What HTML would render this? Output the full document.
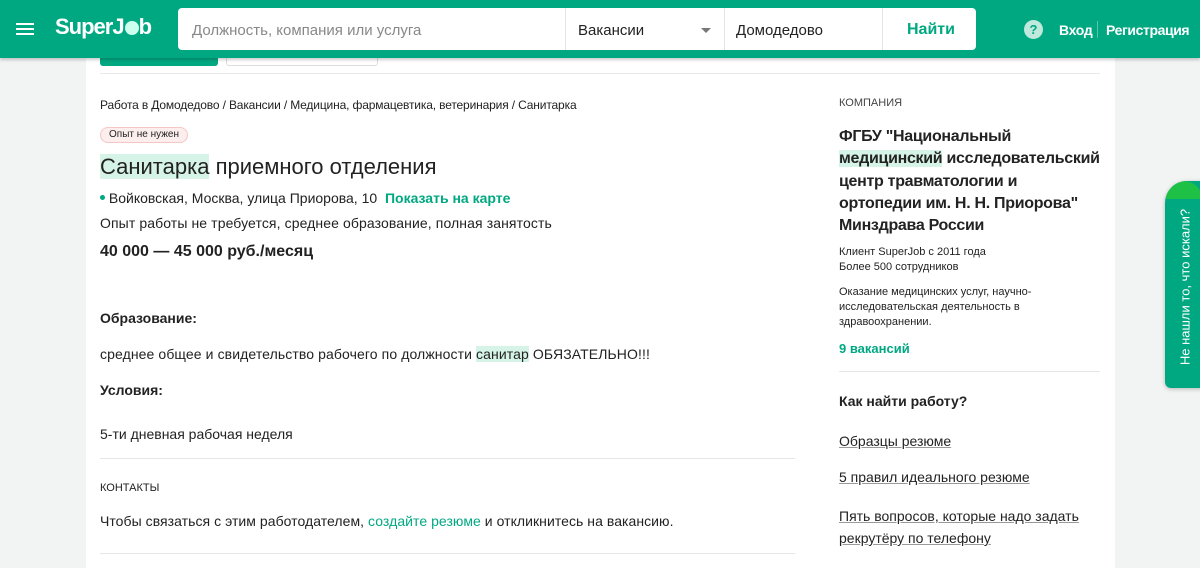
<!DOCTYPE html>
<html><head><meta charset="utf-8"><style>
*{box-sizing:border-box;margin:0;padding:0}
body{width:1200px;height:568px;overflow:hidden;background:#f2f3f3;font-family:"Liberation Sans","DejaVu Sans",sans-serif;color:#222;position:relative}
.hdr{position:absolute;left:0;top:0;width:1200px;height:58px;background:#00a882;box-shadow:0 2px 3px rgba(0,0,0,.2);z-index:5}
.panel{position:absolute;left:86px;top:0;width:1029px;height:568px;background:#fff}
.a{position:absolute;white-space:nowrap}
.hl{background:#d6f3e8}
.g{color:#00a882}
</style></head><body>
<div class="panel"></div>
<div class="a" style="left:100px;top:50px;width:118px;height:16px;background:#00a882;border-radius:3px"></div>
<div class="a" style="left:226px;top:50px;width:152px;height:16px;border:1px solid #ddd;border-radius:3px"></div>
<div class="a" style="left:100px;top:73px;width:1000px;height:1px;background:#e8e8e8"></div>
<div class="hdr">
 <div class="a" style="left:16px;top:23px;width:18px;height:2px;background:#fff;box-shadow:0 5px 0 #fff,0 10px 0 #fff"></div>
 <div class="a" style="left:55px;top:14px;font-size:22px;font-weight:bold;color:#fff;letter-spacing:-1px">Super<span style="letter-spacing:0">J</span><span style="display:inline-block;width:14px;height:14px;border-radius:50%;background:#cfe;vertical-align:-1px"></span>b</div>
 <div class="a" style="left:178px;top:8px;width:798px;height:42px;background:#fff;border-radius:4px"></div>
 <div class="a" style="left:192px;top:22px;font-size:15px;color:#888">Должность, компания или услуга</div>
 <div class="a" style="left:565px;top:8px;width:1px;height:42px;background:#e3e3e3"></div>
 <div class="a" style="left:578px;top:22px;font-size:15px;color:#222">Вакансии</div>
 <div class="a" style="left:701px;top:28px;border-left:5px solid transparent;border-right:5px solid transparent;border-top:5px solid #777"></div>
 <div class="a" style="left:724px;top:8px;width:1px;height:42px;background:#e3e3e3"></div>
 <div class="a" style="left:736px;top:22px;font-size:15px;color:#222">Домодедово</div>
 <div class="a" style="left:882px;top:8px;width:1px;height:42px;background:#e3e3e3"></div>
 <div class="a" style="left:907px;top:21px;font-size:16px;font-weight:bold;color:#00a882">Найти</div>
 <div class="a" style="left:1024px;top:20px;width:19px;height:19px;border-radius:50%;background:#bfe9dc;color:#00a882;font-size:13px;font-weight:bold;text-align:center;line-height:19px">?</div>
 <div class="a" style="left:1059px;top:22px;font-size:14px;font-weight:bold;color:#fff;letter-spacing:-0.3px">Вход</div>
 <div class="a" style="left:1097px;top:21px;width:1px;height:17px;background:#5cc6a8"></div>
 <div class="a" style="left:1106px;top:22px;font-size:14px;font-weight:bold;color:#fff;letter-spacing:-0.4px">Регистрация</div>
</div>
<div class="a" style="left:100px;top:98px;font-size:12px;letter-spacing:-0.15px">Работа в Домодедово / Вакансии / Медицина, фармацевтика, ветеринария / Санитарка</div>
<div class="a" style="left:100px;top:127px;height:16px;padding:0 8px;border:1px solid #f5c6c6;background:#fdeeee;border-radius:8px;font-size:10px;line-height:14px">Опыт не нужен</div>
<div class="a" style="left:100px;top:154px;font-size:22px"><span class="hl">Санитарка</span> приемного отделения</div>
<div class="a" style="left:100px;top:190px;font-size:14px"><span style="display:inline-block;width:5px;height:5px;border-radius:50%;background:#00a882;vertical-align:3px"></span> Войковская, Москва, улица Приорова, 10 &nbsp;<span class="g" style="font-weight:bold">Показать на карте</span></div>
<div class="a" style="left:100px;top:215px;font-size:14px;letter-spacing:0.1px">Опыт работы не требуется, среднее образование, полная занятость</div>
<div class="a" style="left:100px;top:243px;font-size:16px;font-weight:bold">40 000 — 45 000 руб./месяц</div>
<div class="a" style="left:100px;top:310px;font-size:14px;font-weight:bold">Образование:</div>
<div class="a" style="left:100px;top:346px;font-size:14px;letter-spacing:0.1px">среднее общее и свидетельство рабочего по должности <span class="hl">санитар</span> ОБЯЗАТЕЛЬНО!!!</div>
<div class="a" style="left:100px;top:382px;font-size:14px;font-weight:bold">Условия:</div>
<div class="a" style="left:100px;top:426px;font-size:14px">5-ти дневная рабочая неделя</div>
<div class="a" style="left:100px;top:458px;width:695px;height:1px;background:#e6e6e6"></div>
<div class="a" style="left:100px;top:482px;font-size:11px">КОНТАКТЫ</div>
<div class="a" style="left:100px;top:513px;font-size:14px;letter-spacing:0.05px">Чтобы связаться с этим работодателем, <span class="g">создайте резюме</span> и откликнитесь на вакансию.</div>
<div class="a" style="left:100px;top:553px;width:695px;height:1px;background:#e6e6e6"></div>
<div class="a" style="left:839px;top:97px;font-size:11px;color:#444">КОМПАНИЯ</div>
<div class="a" style="left:839px;top:126px;font-size:16px;font-weight:bold;line-height:22.3px;letter-spacing:-0.3px">ФГБУ "Национальный<br><span class="hl">медицинский</span> исследовательский<br>центр травматологии и<br>ортопедии им. Н. Н. Приорова"<br>Минздрава России</div>
<div class="a" style="left:839px;top:245px;font-size:11px;line-height:15px">Клиент SuperJob с 2011 года<br>Более 500 сотрудников</div>
<div class="a" style="left:839px;top:285px;font-size:11px;line-height:15px">Оказание медицинских услуг, научно-<br>исследовательская деятельность в<br>здравоохранении.</div>
<div class="a g" style="left:839px;top:341px;font-size:13px;font-weight:bold">9 вакансий</div>
<div class="a" style="left:839px;top:371px;width:261px;height:1px;background:#e6e6e6"></div>
<div class="a" style="left:839px;top:393px;font-size:14px;font-weight:bold">Как найти работу?</div>
<div class="a" style="left:839px;top:433px;font-size:14px;text-decoration:underline;text-decoration-color:#999">Образцы резюме</div>
<div class="a" style="left:839px;top:469px;font-size:14px;text-decoration:underline;text-decoration-color:#999">5 правил идеального резюме</div>
<div class="a" style="left:839px;top:505px;font-size:14px;line-height:22px;text-decoration:underline;text-decoration-color:#999">Пять вопросов, которые надо задать<br>рекрутёру по телефону</div>
<div class="a" style="left:1165px;top:181px;width:40px;height:207px;background:#00a882;border-radius:22px 0 0 6px;box-shadow:0 1px 4px rgba(0,0,0,.25);overflow:hidden">
 <div style="position:absolute;left:1px;top:0;width:36px;height:36px;border-radius:50%;background:#1fc046;clip-path:inset(0 0 50% 0)"></div>
</div>
<div class="a" style="left:1185px;top:287px;transform:translate(-50%,-50%) rotate(-90deg);font-size:13px;color:#fff">Не нашли то, что искали?</div>
</body></html>
